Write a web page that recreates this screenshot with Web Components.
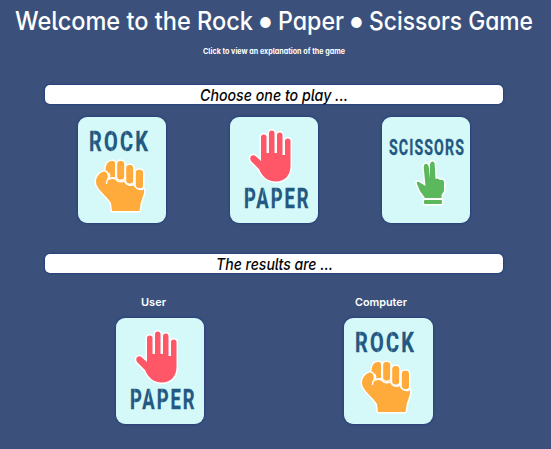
<!DOCTYPE html>
<html lang="en"><head><meta charset="utf-8"><title>Rock Paper Scissors</title>
<style>html,body{margin:0;background:#3b517c}</style></head>
<body><rps-game></rps-game>
<script>
const FACE = 'font-family:Inter,Lato,sans-serif;font-feature-settings:"cv11","cv05";';

class FitText extends HTMLElement {
  connectedCallback() {
    const w = this.getAttribute('width'), s = this.getAttribute('size'),
      wt = this.getAttribute('weight') || 600, it = this.hasAttribute('italic');
    const h = Math.ceil(s * 1.3);
    this.attachShadow({mode:'open'}).innerHTML = `<style>
      :host{display:block;line-height:0}
      svg{display:block;overflow:visible}
      text{${FACE}font-size:${s}px;font-weight:${wt};font-style:${it?'italic':'normal'};fill:currentColor}
    </style><svg width="${w}" height="${h}"><text x="0" y="${s}" textLength="${w}" lengthAdjust="spacingAndGlyphs">${this.getAttribute('text')}</text></svg>`;
  }
}
customElements.define('fit-text', FitText);

const PICTURES = {
  rock: `<text transform="translate(11 34) scale(.71 1)" font-size="28" textLength="83">ROCK</text>
    <path class="slit" d="M34 13V17M34 31V35M47.800 13V17M47.800 31V35M16 13V35"/>
    <g class="rim" fill="#ffab3c"><path d="M34 94L33 86C29 79 18 72 18 65C18 59 22 55 28 54Q32 56 32 60Q39 62 47 62L56 67L66 72V76L62.700 86L61.500 94Z"/>
    <path d="M27.300 53Q28 44 34 44H35Q37 44 37 47V60Q33 60 31 61Q32 55 27.300 53Z"/><rect x="39.200" y="44" width="7" height="18.500" rx="3"/><rect x="48.200" y="48" width="7" height="18.500" rx="3"/><rect x="57.800" y="52.700" width="7.200" height="18.500" rx="3"/></g>
    <path d="M30.500 56Q33 59 30 62Q28.500 64 28.500 67" fill="none" stroke="#fff" stroke-width="1.500"/>
    <path d="M31 62.500L36 62L46 65L55 70L64 74L60 88H36L28 76Z" fill="#ffab3c"/>
    <path d="M31 62Q35 60.500 38 62.500Q41 66 46.500 64Q50 70 56 67.500Q59 74 65.500 72" fill="none" stroke="#fff" stroke-width="1.500"/>`,
  paper: `<text transform="translate(14 91) scale(.68 1)" font-size="27" textLength="95">PAPER</text>
    <path class="slit" d="M18.800 71V92M46 71V92M34 71L31.500 84"/>
    <path class="rim" fill="#ff5668" d="M31 20Q31 17.500 33.700 17.500Q36.500 17.500 36.500 20V36H39V16.500Q39 13.500 41.700 13.500Q44.500 13.500 44.500 16.500V36H47V18.500Q47 15.500 49.700 15.500Q52.500 15.500 52.500 18.500V38H55V24Q55 21.500 57.700 21.500Q60.500 21.500 60.500 24V49C60.500 58 55 64.500 46 64.500C37 64.500 32 59 29 52L21 44Q19 40 22 38.500Q24 37.500 26 39.500L31 44Z"/>`,
  scissors: `<text transform="translate(7 38) scale(.66 1)" font-size="21.500" textLength="113.500">SCISSORS</text>
    <g class="rim" fill="#5cb85c"><path d="M43 81L38 74L35 67Q34 64 37 65L43.500 69L41.700 50Q41.700 47 44.200 46.700Q46.500 47 46.800 50L48 62V47Q48.500 44.500 50.500 44.500Q52.500 44.500 52.700 47.500L53.500 62Q56 60.500 58 63Q62 62 62 65.500V74L59.500 78V81Z"/><rect x="42" y="83" width="18" height="4" rx="1"/></g>`
};
class GameCard extends HTMLElement {
  connectedCallback() {
    this.attachShadow({mode:'open'}).innerHTML = `<style>
      :host{display:block;width:88.300px;height:106.500px;border-radius:9px;background:#d5f8f8;box-shadow:0 0 2px 1px #29427b}
      svg{display:block;overflow:visible}
      text{font-family:Roboto,sans-serif;font-weight:700;fill:#235881;stroke:#235881;stroke-width:.3}
      .rim{stroke:#fff;stroke-width:3;stroke-linejoin:round;paint-order:stroke}
      .slit{fill:none;stroke:#d5f8f8;stroke-width:.8;opacity:.45}
    </style><svg width="88" height="106.500">${PICTURES[this.getAttribute('kind')]}</svg>`;
  }
}
customElements.define('game-card', GameCard);

class GameBanner extends HTMLElement {
  connectedCallback() {
    this.attachShadow({mode:'open'}).innerHTML = `<style>
      :host{display:flex;justify-content:center;box-sizing:border-box;width:458px;height:19px;margin-left:45px;border-radius:5px;background:#fff;color:#050505;box-shadow:0 0 1.500px 1px #29427b}
    </style><slot></slot>`;
  }
}
customElements.define('game-banner', GameBanner);

class RpsGame extends HTMLElement {
  connectedCallback() {
    this.attachShadow({mode:'open'}).innerHTML = `<style>
      :host{display:flex;flex-direction:column;box-sizing:border-box;height:449px;width:551px;background:#3b517c;color:#fff}
      header{height:85px;box-sizing:border-box;padding:5px 0 0 15px}
      .title{display:flex;height:33px}
      .dot{width:25px;text-align:center;font:14px/36px Inter,sans-serif}
      .sub{padding:8px 0 0 188px}
      .row{display:flex;gap:64px;padding:12.500px 0 0 77.500px;height:137px}
      .results{display:flex;gap:140.700px;padding:22px 0 0 115.500px}
      .results fit-text{padding:0 0 8px 25px}
      .results section:last-child fit-text{padding-left:11px}
      .results section{width:88.300px}
    </style>
    <header><div class="title"><fit-text text="Welcome to the Rock" width="238" size="25" weight="550"></fit-text><span class="dot">●</span><fit-text text="Paper" width="66" size="25" weight="550"></fit-text><span class="dot">●</span><fit-text text="Scissors Game" width="164" size="25" weight="550"></fit-text></div>
    <fit-text class="sub" text="Click to view an explanation of the game" width="142" size="7.500" weight="650"></fit-text></header>
    <game-banner><fit-text text="Choose one to play ..." width="148" size="16" weight="500" italic></fit-text></game-banner>
    <div class="row"><game-card kind="rock"></game-card><game-card kind="paper"></game-card><game-card kind="scissors"></game-card></div>
    <game-banner><fit-text text="The results are ..." width="117" size="16" weight="500" italic></fit-text></game-banner>
    <div class="results"><section><fit-text text="User" width="25" size="11"></fit-text><game-card kind="paper"></game-card></section>
    <section><fit-text text="Computer" width="52" size="11"></fit-text><game-card kind="rock"></game-card></section></div>`;
  }
}
customElements.define('rps-game', RpsGame);
</script></body></html>
